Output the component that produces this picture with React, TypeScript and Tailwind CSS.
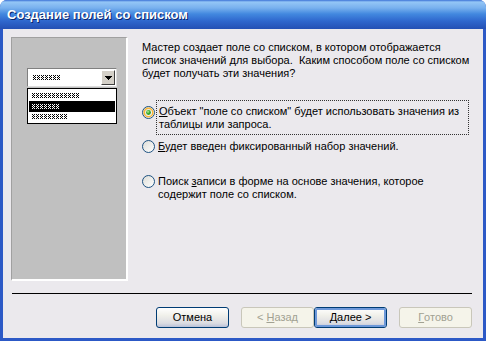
import React from "react";

// glyph-like hatch used by the combo box preview
const Hatch = ({ n, color }: { n: number; color: string }) => {
  const px: [number, number][] = [
    [0, 0], [2, 0], [1, 1], [0, 2], [2, 2], [1, 3], [0, 4], [2, 4],
  ];
  return (
    <svg width={n * 4} height={5} shapeRendering="crispEdges" className="block">
      {Array.from({ length: n }).map((_, i) =>
        px.map(([x, y], j) => (
          <rect key={`${i}-${j}`} x={i * 4 + x} y={y} width={1} height={1} fill={color} />
        ))
      )}
    </svg>
  );
};

const Radio = ({ checked, hot }: { checked?: boolean; hot?: boolean }) => (
  <svg width="13" height="13" viewBox="0 0 13 13" className="shrink-0">
    <defs>
      <linearGradient id="rbg" x1="0" y1="0" x2="1" y2="1">
        <stop offset="0" stopColor="#dcdcd6" />
        <stop offset="1" stopColor="#ffffff" />
      </linearGradient>
      <radialGradient id="rdot" cx="0.4" cy="0.35" r="0.7">
        <stop offset="0" stopColor="#c2f0a6" />
        <stop offset="0.5" stopColor="#3eb12d" />
        <stop offset="1" stopColor="#218c1f" />
      </radialGradient>
    </defs>
    <circle cx="6.5" cy="6.5" r="6" fill="url(#rbg)" stroke="#1c5180" strokeWidth="1" />
    {hot && <circle cx="6.5" cy="6.5" r="4.3" fill="none" stroke="#f8b636" strokeWidth="1.6" />}
    {checked && <circle cx="6.5" cy="6.5" r="2.4" fill="url(#rdot)" />}
  </svg>
);

const Btn = ({
  children,
  disabled,
  def,
}: {
  children: React.ReactNode;
  disabled?: boolean;
  def?: boolean;
}) => {
  if (disabled) {
    return (
      <div className="w-[73px] h-[21px] flex items-center justify-center rounded-[3px] border border-[#c9c7ba] bg-[#f5f4ea] text-[#a1a192]">
        {children}
      </div>
    );
  }
  return (
    <div className="w-[73px] h-[21px] rounded-[3px] border border-[#003c74] bg-[linear-gradient(to_bottom,#ffffff_0%,#f0f0ea_40%,#dcdce2_80%,#b9c1d8_100%)] text-black">
      <div
        className={`w-full h-full flex items-center justify-center rounded-[2px] ${
          def ? "border-2 border-[#6d98d9]" : "border border-transparent"
        }`}
      >
        {children}
      </div>
    </div>
  );
};

export default function App() {
  return (
    <div
      className="w-[486px] h-[341px] flex flex-col rounded-t-[7px] bg-[#2c59c6] overflow-hidden text-[11px] leading-[13px] text-black"
      style={{ fontFamily: '"Liberation Sans", Arial, sans-serif' }}
    >
      {/* title bar */}
      <div className="h-[29px] shrink-0 flex items-center pl-[7px] pb-[1px] bg-[linear-gradient(to_bottom,#3c72d6_0px,#94c6f6_2px,#78b0ee_8px,#4288df_14px,#2f67cd_21px,#2450b4_29px)]">
        <span className="text-white font-bold text-[13px] [text-shadow:1px_1px_0_#0a246a]">
          Создание полей со списком
        </span>
      </div>

      {/* body */}
      <div className="flex-1 mx-[3px] mb-[3px] bg-[#ebe9ed] flex flex-col pt-[8px]">
        <div className="flex h-[244px]">
          {/* preview panel */}
          <div className="ml-[8px] w-[117px] h-[244px] border-t border-l border-[#a0a0a0] border-b-2 border-r-2 border-b-white border-r-white bg-[#c0c0c0]">
            <div className="ml-[15px] mt-[30px] w-[90px]">
              <div className="h-[19px] border border-t-[#808080] border-l-[#808080] border-b-[#dcdcdc] border-r-[#dcdcdc] bg-white flex items-center">
                <div className="ml-[5px] flex-1">
                  <Hatch n={7} color="#000" />
                </div>
                <div className="w-[14px] h-[15px] mr-[1px] bg-[#d4d0c8] border border-t-white border-l-white border-b-[#404040] border-r-[#404040] flex items-center justify-center">
                  <svg width="7" height="4" viewBox="0 0 7 4" shapeRendering="crispEdges">
                    <path d="M0 0h7v1H0zM1 1h5v1H1zM2 2h3v1H2zM3 3h1v1H3z" fill="#000" />
                  </svg>
                </div>
              </div>
              <div className="mt-px h-[36px] border border-black bg-white flex flex-col pt-[4px]">
                <div className="pl-[4px] h-[7px]">
                  <Hatch n={12} color="#000" />
                </div>
                <div className="mt-[1px] mx-px h-[11px] bg-black flex items-center pl-[3px]">
                  <Hatch n={7} color="#fff" />
                </div>
                <div className="pl-[4px] mt-[2px]">
                  <Hatch n={9} color="#000" />
                </div>
              </div>
            </div>
          </div>

          {/* right column */}
          <div className="ml-[14px] pt-[4px] flex-1 pr-[12px]">
            <p>
              Мастер создает поле со списком, в котором отображается
              <br />
              список значений для выбора.&nbsp; Каким способом поле со списком
              <br />
              будет получать эти значения?
            </p>

            <div className="mt-[24px] flex items-start">
              <div className="mt-[2px]">
                <Radio checked hot />
              </div>
              <div className="ml-px -mt-[4px] pl-[2px] pt-[4px] pb-[3px] w-[313px] border border-dotted border-[#333]">
                <u>О</u>бъект "поле со списком" будет использовать значения из
                <br />
                таблицы или запроса.
              </div>
            </div>

            <div className="mt-[5px] flex items-start">
              <Radio />
              <div className="ml-[3px]">
                <u>Б</u>удет введен фиксированный набор значений.
              </div>
            </div>

            <div className="mt-[22px] flex items-start">
              <Radio />
              <div className="ml-[3px]">
                Поиск <u>з</u>аписи в форме на основе значения, которое
                <br />
                содержит поле со списком.
              </div>
            </div>
          </div>
        </div>

        {/* separator */}
        <div className="mt-[12px] ml-[9px] mr-[11px] h-px bg-black" />

        {/* buttons */}
        <div className="mt-[13px] flex justify-end mr-[11px]">
          <Btn>Отмена</Btn>
          <div className="ml-[12px] flex">
            <Btn disabled>
              &lt; <u className="ml-[3px]">Н</u>азад
            </Btn>
            <Btn def>
              <u>Д</u>алее &gt;
            </Btn>
          </div>
          <div className="ml-[12px]">
            <Btn disabled>
              <u>Г</u>отово
            </Btn>
          </div>
        </div>
      </div>
    </div>
  );
}
